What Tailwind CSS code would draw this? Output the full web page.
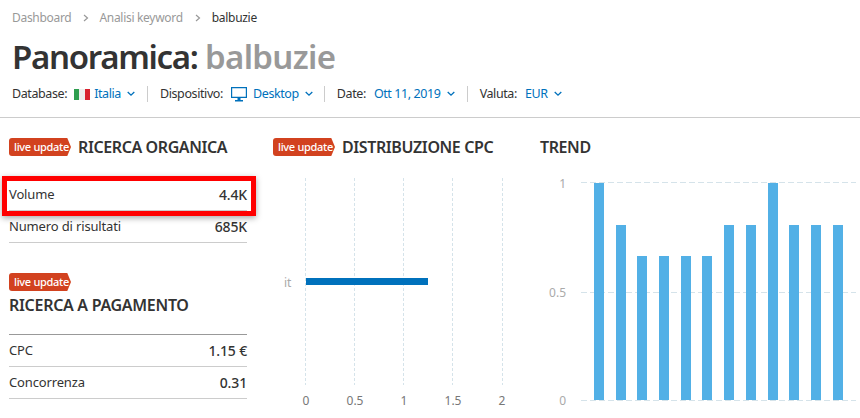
<!DOCTYPE html>
<html lang="en">
<head>
    <meta charset="UTF-8">
    <title>Panoramica: balbuzie</title>
    <script src="https://cdn.jsdelivr.net/npm/@tailwindcss/browser@4"></script>
</head>
<body class="bg-white text-[#333] font-['Noto_Sans',sans-serif] w-[860px] h-[418px] overflow-hidden relative">
    <!-- Header -->
    <header class="h-[118px] border-b border-[#ccc] pl-3 pt-[10px]">
        <nav class="flex items-center h-4 text-[12px] text-[#999] tracking-[-0.3px]">
            <span>Dashboard</span>
            <svg class="w-[6px] h-[8px] ml-[12px] mr-[10px]" viewBox="0 0 6 8" fill="none" stroke="#999" stroke-width="1.2"><path d="M1 1l3.5 3L1 7"/></svg>
            <span>Analisi keyword</span>
            <svg class="w-[6px] h-[8px] ml-[12px] mr-[11px]" viewBox="0 0 6 8" fill="none" stroke="#999" stroke-width="1.2"><path d="M1 1l3.5 3L1 7"/></svg>
            <span class="text-[#333]">balbuzie</span>
        </nav>
        <h1 class="mt-[10px] h-[42px] leading-[42px] text-[33px] font-semibold tracking-[-1.3px] whitespace-nowrap">Panoramica: <span class="text-[#999] tracking-[-0.65px]">balbuzie</span></h1>
        <div class="mt-[8px] flex items-center h-4 text-[12.5px] tracking-[-0.4px] whitespace-nowrap">
            <span>Database:</span>
            <span class="ml-[7px] flex w-4 h-[11px]"><i class="flex-1 bg-[#2e9e4f]"></i><i class="flex-1 bg-[#eee]"></i><i class="flex-1 bg-[#d8232f]"></i></span>
            <span class="ml-[4px] text-[#0071bc]">Italia</span>
            <svg class="w-2 h-[6px] ml-[6px]" viewBox="0 0 8 6" fill="none" stroke="#0071bc" stroke-width="1.3"><path d="M.7 1l3.3 3.2L7.300 1"/></svg>
            <i class="w-px h-4 bg-[#ccc] ml-[12px] mr-[12px]"></i>
            <span>Dispositivo:</span>
            <svg class="w-4 h-[15px] ml-[8px]" viewBox="0 0 16 15" fill="#0071bc"><path fill-rule="evenodd" d="M0 0h16v11H0zM1.200 1.200v8.600h13.600V1.200z"/><path d="M6.500 11h3v2h2.500v1.500H4V13h2.500z"/></svg>
            <span class="ml-[6px] text-[#0071bc]">Desktop</span>
            <svg class="w-2 h-[6px] ml-[6px]" viewBox="0 0 8 6" fill="none" stroke="#0071bc" stroke-width="1.3"><path d="M.7 1l3.3 3.2L7.300 1"/></svg>
            <i class="w-px h-4 bg-[#ccc] ml-[11px] mr-[12px]"></i>
            <span>Date:</span>
            <span class="ml-[8px] text-[#0071bc]">Ott 11, 2019</span>
            <svg class="w-2 h-[6px] ml-[6px]" viewBox="0 0 8 6" fill="none" stroke="#0071bc" stroke-width="1.3"><path d="M.7 1l3.3 3.2L7.300 1"/></svg>
            <i class="w-px h-4 bg-[#ccc] ml-[12px] mr-[12px]"></i>
            <span>Valuta:</span>
            <span class="ml-[8px] text-[#0071bc]">EUR</span>
            <svg class="w-2 h-[6px] ml-[6px]" viewBox="0 0 8 6" fill="none" stroke="#0071bc" stroke-width="1.3"><path d="M.7 1l3.3 3.2L7.300 1"/></svg>
        </div>
    </header>

    <main class="flex">
        <!-- Left column -->
        <section class="w-[238px] ml-[9px] shrink-0 pt-5">
            <div class="flex items-center h-[18px]">
                <span class="w-[62px] h-[18px] leading-[18px] pl-[5px] bg-[#d2421f] text-white text-[11px] font-medium tracking-[-0.3px] rounded-l-[3px] whitespace-nowrap [clip-path:polygon(0_0,94%_0,100%_50%,94%_100%,0_100%)]">live update</span>
                <h2 class="ml-[7px] text-[16px] font-semibold tracking-[-0.4px] whitespace-nowrap">RICERCA ORGANICA</h2>
            </div>
            <div class="mt-[23px]">
                <div class="flex justify-between items-center h-[32px] border-b border-[#ccc] text-[13px] tracking-[-0.15px]"><span>Volume</span><span class="font-medium text-[14px]">4.4K</span></div>
                <div class="flex justify-between items-center h-[32px] border-b border-[#ccc] text-[13px] tracking-[-0.15px]"><span>Numero di risultati</span><span class="font-medium text-[14px]">685K</span></div>
            </div>
            <span class="block mt-[30px] w-[62px] h-[18px] leading-[18px] pl-[5px] bg-[#d2421f] text-white text-[11px] font-medium tracking-[-0.3px] rounded-l-[3px] whitespace-nowrap [clip-path:polygon(0_0,94%_0,100%_50%,94%_100%,0_100%)]">live update</span>
            <h2 class="mt-[2px] h-[24px] leading-[24px] text-[16px] font-semibold tracking-[-0.3px] whitespace-nowrap">RICERCA A PAGAMENTO</h2>
            <div class="mt-[17px] border-t border-[#999]">
                <div class="flex justify-between items-center h-[32px] border-b border-[#ccc] text-[13px] tracking-[-0.15px]"><span>CPC</span><span class="font-medium text-[14px]">1.15 €</span></div>
                <div class="flex justify-between items-center h-[32px] border-b border-[#ccc] text-[13px] tracking-[-0.15px]"><span>Concorrenza</span><span class="font-medium text-[14px]">0.31</span></div>
            </div>
        </section>

        <!-- CPC distribution -->
        <section class="w-[267px] ml-[26px] shrink-0 pt-5">
            <div class="flex items-center h-[18px]">
                <span class="w-[62px] h-[18px] leading-[18px] pl-[5px] bg-[#d2421f] text-white text-[11px] font-medium tracking-[-0.3px] rounded-l-[3px] whitespace-nowrap [clip-path:polygon(0_0,94%_0,100%_50%,94%_100%,0_100%)]">live update</span>
                <h2 class="ml-[7px] text-[16px] font-semibold tracking-[-0.4px] whitespace-nowrap">DISTRIBUZIONE CPC</h2>
            </div>
            <svg class="mt-[22px] block overflow-visible" width="240" height="232" viewBox="273 178 240 232" font-family="Noto Sans, sans-serif" font-size="12">
                <g stroke="#d5e3ea" stroke-dasharray="3 2">
                    <path d="M305.500 178V385M354.500 178V385M403.500 178V385M452.500 178V385M502.500 178V385"/>
                </g>
                <rect x="306" y="278" width="122" height="7" fill="#0071bc"/>
                <text x="284" y="287" fill="#aaa">it</text>
                <g fill="#777" text-anchor="middle">
                    <text x="306" y="405">0</text>
                    <text x="355" y="405">0.5</text>
                    <text x="404" y="405">1</text>
                    <text x="453" y="405">1.5</text>
                    <text x="502" y="405">2</text>
                </g>
            </svg>
        </section>

        <!-- Trend -->
        <section class="flex-1 pt-5">
            <h2 class="h-[18px] leading-[18px] text-[16px] font-semibold tracking-[-0.4px] whitespace-nowrap">TREND</h2>
            <svg class="mt-[22px] block -ml-[10px] overflow-visible" width="330" height="232" viewBox="530 178 330 232" font-family="Noto Sans, sans-serif" font-size="12">
                <g stroke="#d5e3ea" stroke-dasharray="6 3">
                    <path d="M581 182.500H856M581 292.500H856M581 400.500H856"/>
                </g>
                <g fill="#52b0e6">
                    <rect x="594" y="183" width="10" height="217"/>
                    <rect x="616" y="225" width="10" height="175"/>
                    <rect x="637" y="256" width="10" height="144"/>
                    <rect x="659" y="256" width="10" height="144"/>
                    <rect x="681" y="256" width="10" height="144"/>
                    <rect x="702" y="256" width="10" height="144"/>
                    <rect x="724" y="225" width="10" height="175"/>
                    <rect x="746" y="225" width="10" height="175"/>
                    <rect x="768" y="183" width="10" height="217"/>
                    <rect x="789" y="225" width="10" height="175"/>
                    <rect x="811" y="225" width="10" height="175"/>
                    <rect x="833" y="225" width="10" height="175"/>
                </g>
                <g fill="#aaa" text-anchor="end">
                    <text x="566" y="188">1</text>
                    <text x="566" y="297">0.5</text>
                    <text x="566" y="405">0</text>
                </g>
            </svg>
        </section>
    </main>

    <!-- Annotation over the Volume row -->
    <div class="absolute left-[2px] top-[176px] w-[254px] h-[40px] border-[5px] border-[#f00] shadow-[0_2px_6px_rgba(0,0,0,0.35)]"></div>
</body>
</html>
